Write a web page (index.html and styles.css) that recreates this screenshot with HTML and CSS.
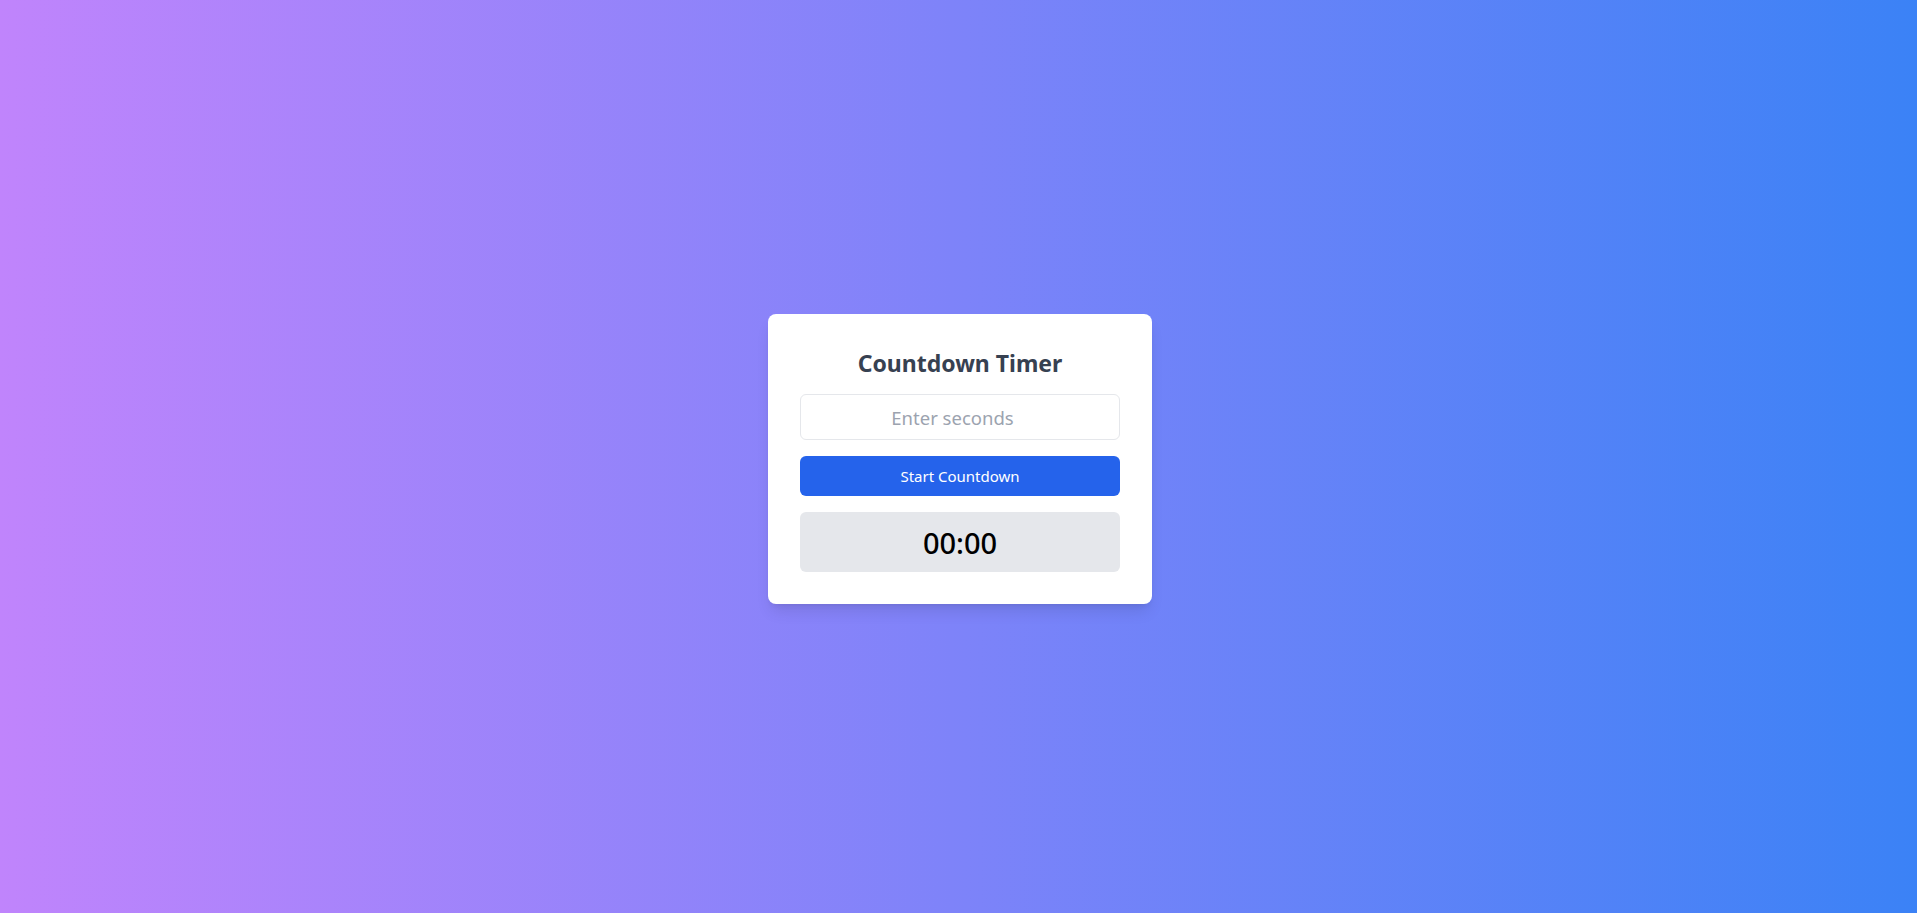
FILE: index.html
```html
<!DOCTYPE html>
<html lang="en">
<head>
<meta charset="utf-8">
<title>Countdown Timer</title>
<link rel="stylesheet" href="styles.css">
</head>
<body>
<main class="page">
  <section class="card">
    <h1 class="title">Countdown Timer</h1>
    <input class="seconds" type="number" placeholder="Enter seconds">
    <button class="start" type="button">Start Countdown</button>
    <div class="display">00:00</div>
  </section>
</main>
</body>
</html>
```

FILE: styles.css
```css
* { box-sizing: border-box; }
html, body { margin: 0; padding: 0; }
body {
  font-family: "Noto Sans", "Open Sans", sans-serif;
}
.page {
  min-height: 100vh;
  display: flex;
  align-items: center;
  justify-content: center;
  background: linear-gradient(to right, #c084fc, #3b82f6);
}
.card {
  width: 384px;
  background: #fff;
  border-radius: 8px;
  padding: 32px;
  display: flex;
  flex-direction: column;
  box-shadow: 0 10px 15px -3px rgba(0,0,0,0.1), 0 4px 6px -4px rgba(0,0,0,0.1);
  margin: 5px 0 0 3px;
}
.title {
  margin: 0 0 16px;
  padding-top: 1px;
  height: 32px;
  font-size: 23px;
  line-height: 32px;
  font-weight: 700;
  color: #374151;
  text-align: center;
}
.seconds {
  width: 100%;
  height: 46px;
  border: 1px solid #e5e7eb;
  border-radius: 6px;
  padding: 8px 27px 8px 12px;
  font-family: inherit;
  font-size: 18.5px;
  text-align: center;
  color: #111827;
  outline: none;
  margin: 0 0 16px;
}
.seconds::placeholder { color: #9ca3af; }
.seconds::-webkit-inner-spin-button,
.seconds::-webkit-outer-spin-button { -webkit-appearance: none; margin: 0; }
.start {
  height: 40px;
  border: 0;
  border-radius: 6px;
  background: #2563eb;
  color: #fff;
  font-family: inherit;
  font-size: 15px;
  cursor: pointer;
  margin: 0 0 16px;
}
.display {
  height: 60px;
  background: #e5e7eb;
  border-radius: 6px;
  display: flex;
  align-items: center;
  justify-content: center;
  font-size: 29px;
  font-weight: 500;
  color: #000;
}
```
